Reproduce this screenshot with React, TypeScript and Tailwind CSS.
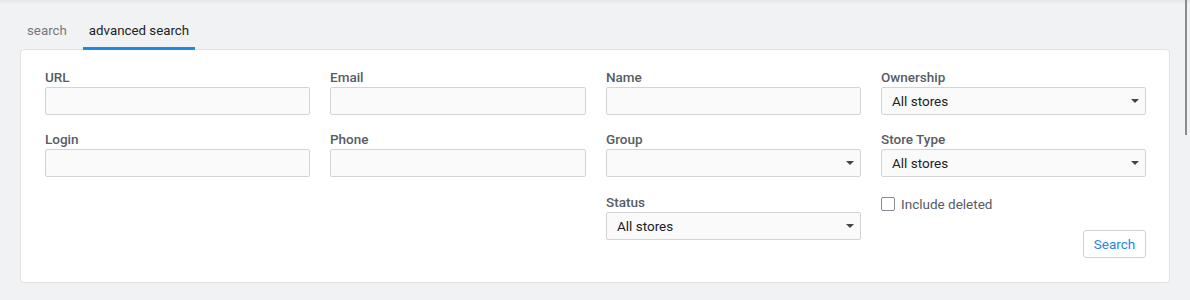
import React from "react";

const font = { fontFamily: "Roboto, 'Liberation Sans', sans-serif" };

const Label = ({ children }: { children: React.ReactNode }) => (
  <div className="text-[13.5px] leading-[17px] font-medium text-[#575c63] mb-px">{children}</div>
);

const TextInput = () => (
  <div className="h-[28px] w-full rounded-[2px] border border-[#d4d4d4] bg-[#fafafa]" />
);

const Select = ({ value = "" }: { value?: string }) => (
  <div className="h-[28px] w-full rounded-[2px] border border-[#d4d4d4] bg-[#fafafa] flex items-center justify-between pl-[10px] pr-[6px]">
    <span className="text-[13.5px] text-[#222]">{value}</span>
    <span className="w-0 h-0 border-l-[4px] border-r-[4px] border-t-[4px] border-l-transparent border-r-transparent border-t-[#444]" />
  </div>
);

const Field = ({ label, children, className = "" }: { label: string; children: React.ReactNode; className?: string }) => (
  <div className={className}>
    <Label>{label}</Label>
    {children}
  </div>
);

export default function App() {
  return (
    <div style={font} className="relative w-[1190px] h-[300px] bg-[#f1f2f4] overflow-hidden">
      <div className="absolute top-0 left-0 right-0 h-[4px] bg-gradient-to-b from-[#e4e5e8] to-transparent" />
      <div className="absolute top-0 right-[3px] w-[2px] h-[135px] bg-[#8c8c8c]" />

      <div className="px-5">
        <div className="flex gap-[10px] pl-px pt-[22px]">
          <div className="px-[6px] pb-[8px] border-b-[3px] border-transparent text-[13.3px] leading-[17px] text-[#777]">
            search
          </div>
          <div className="px-[6px] pb-[8px] border-b-[3px] border-[#1e88e5] text-[13.3px] leading-[17px] text-[#222]">
            advanced search
          </div>
        </div>

        <div className="bg-white border border-[#e2e2e2] rounded-[4px] -mt-px pl-[24px] pr-[23px] pt-[19px] pb-[24px]">
          <div className="grid grid-cols-[265px_256px_255px_265px] gap-x-5 gap-y-4">
            <Field label="URL"><TextInput /></Field>
            <Field label="Email"><TextInput /></Field>
            <Field label="Name"><TextInput /></Field>
            <Field label="Ownership"><Select value="All stores" /></Field>

            <Field label="Login"><TextInput /></Field>
            <Field label="Phone"><TextInput /></Field>
            <Field label="Group"><Select /></Field>
            <Field label="Store Type"><Select value="All stores" /></Field>

            <div />
            <div />
            <Field label="Status" className="pt-px"><Select value="All stores" /></Field>
            <div className="flex flex-col">
              <label className="flex items-center gap-[6px] mt-[4px] h-[14px]">
                <span className="w-[14px] h-[14px] rounded-[2px] border-[1.5px] border-[#8a8a94] bg-white" />
                <span className="text-[13.5px] text-[#555b63]">Include deleted</span>
              </label>
              <button className="self-end mt-[19px] h-[28px] w-[63px] rounded-[3px] border border-[#cfd3d8] bg-white text-[13.5px] text-[#1e88e5]">
                Search
              </button>
            </div>
          </div>
        </div>
      </div>
    </div>
  );
}
